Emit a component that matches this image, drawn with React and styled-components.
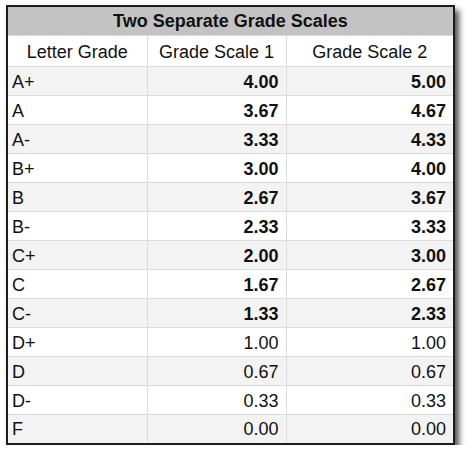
import React from 'react';
import styled, { createGlobalStyle } from 'styled-components';

const rows = [
  ['A+', '4.00', '5.00', true],
  ['A', '3.67', '4.67', true],
  ['A-', '3.33', '4.33', true],
  ['B+', '3.00', '4.00', true],
  ['B', '2.67', '3.67', true],
  ['B-', '2.33', '3.33', true],
  ['C+', '2.00', '3.00', true],
  ['C', '1.67', '2.67', true],
  ['C-', '1.33', '2.33', true],
  ['D+', '1.00', '1.00', false],
  ['D', '0.67', '0.67', false],
  ['D-', '0.33', '0.33', false],
  ['F', '0.00', '0.00', false],
];

const Global = createGlobalStyle`
  body {
    margin: 0;
    background: #fff;
    font-family: "Liberation Sans", Arial, sans-serif;
  }
`;

const Page = styled.div`
  padding: 5px 0 0 6px;
`;

const Table = styled.table`
  width: 449px;
  border-collapse: collapse;
  border: 2px solid #1c1c1c;
  box-shadow: 4px 5px 6px rgba(0, 0, 0, 0.7);
  color: #111;
  font-size: 18px;
  table-layout: fixed;
`;

const Title = styled.th`
  height: 27px;
  padding: 1px 0 0;
  background: #c3c3c3;
  font-weight: 700;
  text-align: center;
  border-bottom: 1px solid #d8d8d8;
`;

const Head = styled.th`
  height: 28px;
  padding: 2px 0 0;
  font-weight: 400;
  text-align: center;
  background: #fff;
  border: 1px solid #dcdcdc;
  border-top: none;
`;

const Row = styled.tr`
  height: 29px;
  background: ${p => (p.$shade ? '#f3f3f3' : '#fff')};
`;

const Cell = styled.td`
  padding: 1px ${p => (p.$right ? '7px' : '4px')} 0;
  border: 1px solid #dcdcdc;
  text-align: ${p => (p.$right ? 'right' : 'left')};
  font-weight: ${p => (p.$bold ? 700 : 400)};
  line-height: 1;
`;

export default function App() {
  return (
    <Page>
      <Global />
      <Table>
        <colgroup>
          <col style={{ width: 140 }} />
          <col style={{ width: 139 }} />
          <col />
        </colgroup>
        <thead>
          <tr>
            <Title colSpan={3}>Two Separate Grade Scales</Title>
          </tr>
          <tr>
            <Head>Letter Grade</Head>
            <Head>Grade Scale 1</Head>
            <Head>Grade Scale 2</Head>
          </tr>
        </thead>
        <tbody>
          {rows.map(([letter, one, two, bold], i) => (
            <Row key={letter} $shade={i % 2 === 0}>
              <Cell>{letter}</Cell>
              <Cell $right $bold={bold}>{one}</Cell>
              <Cell $right $bold={bold}>{two}</Cell>
            </Row>
          ))}
        </tbody>
      </Table>
    </Page>
  );
}
